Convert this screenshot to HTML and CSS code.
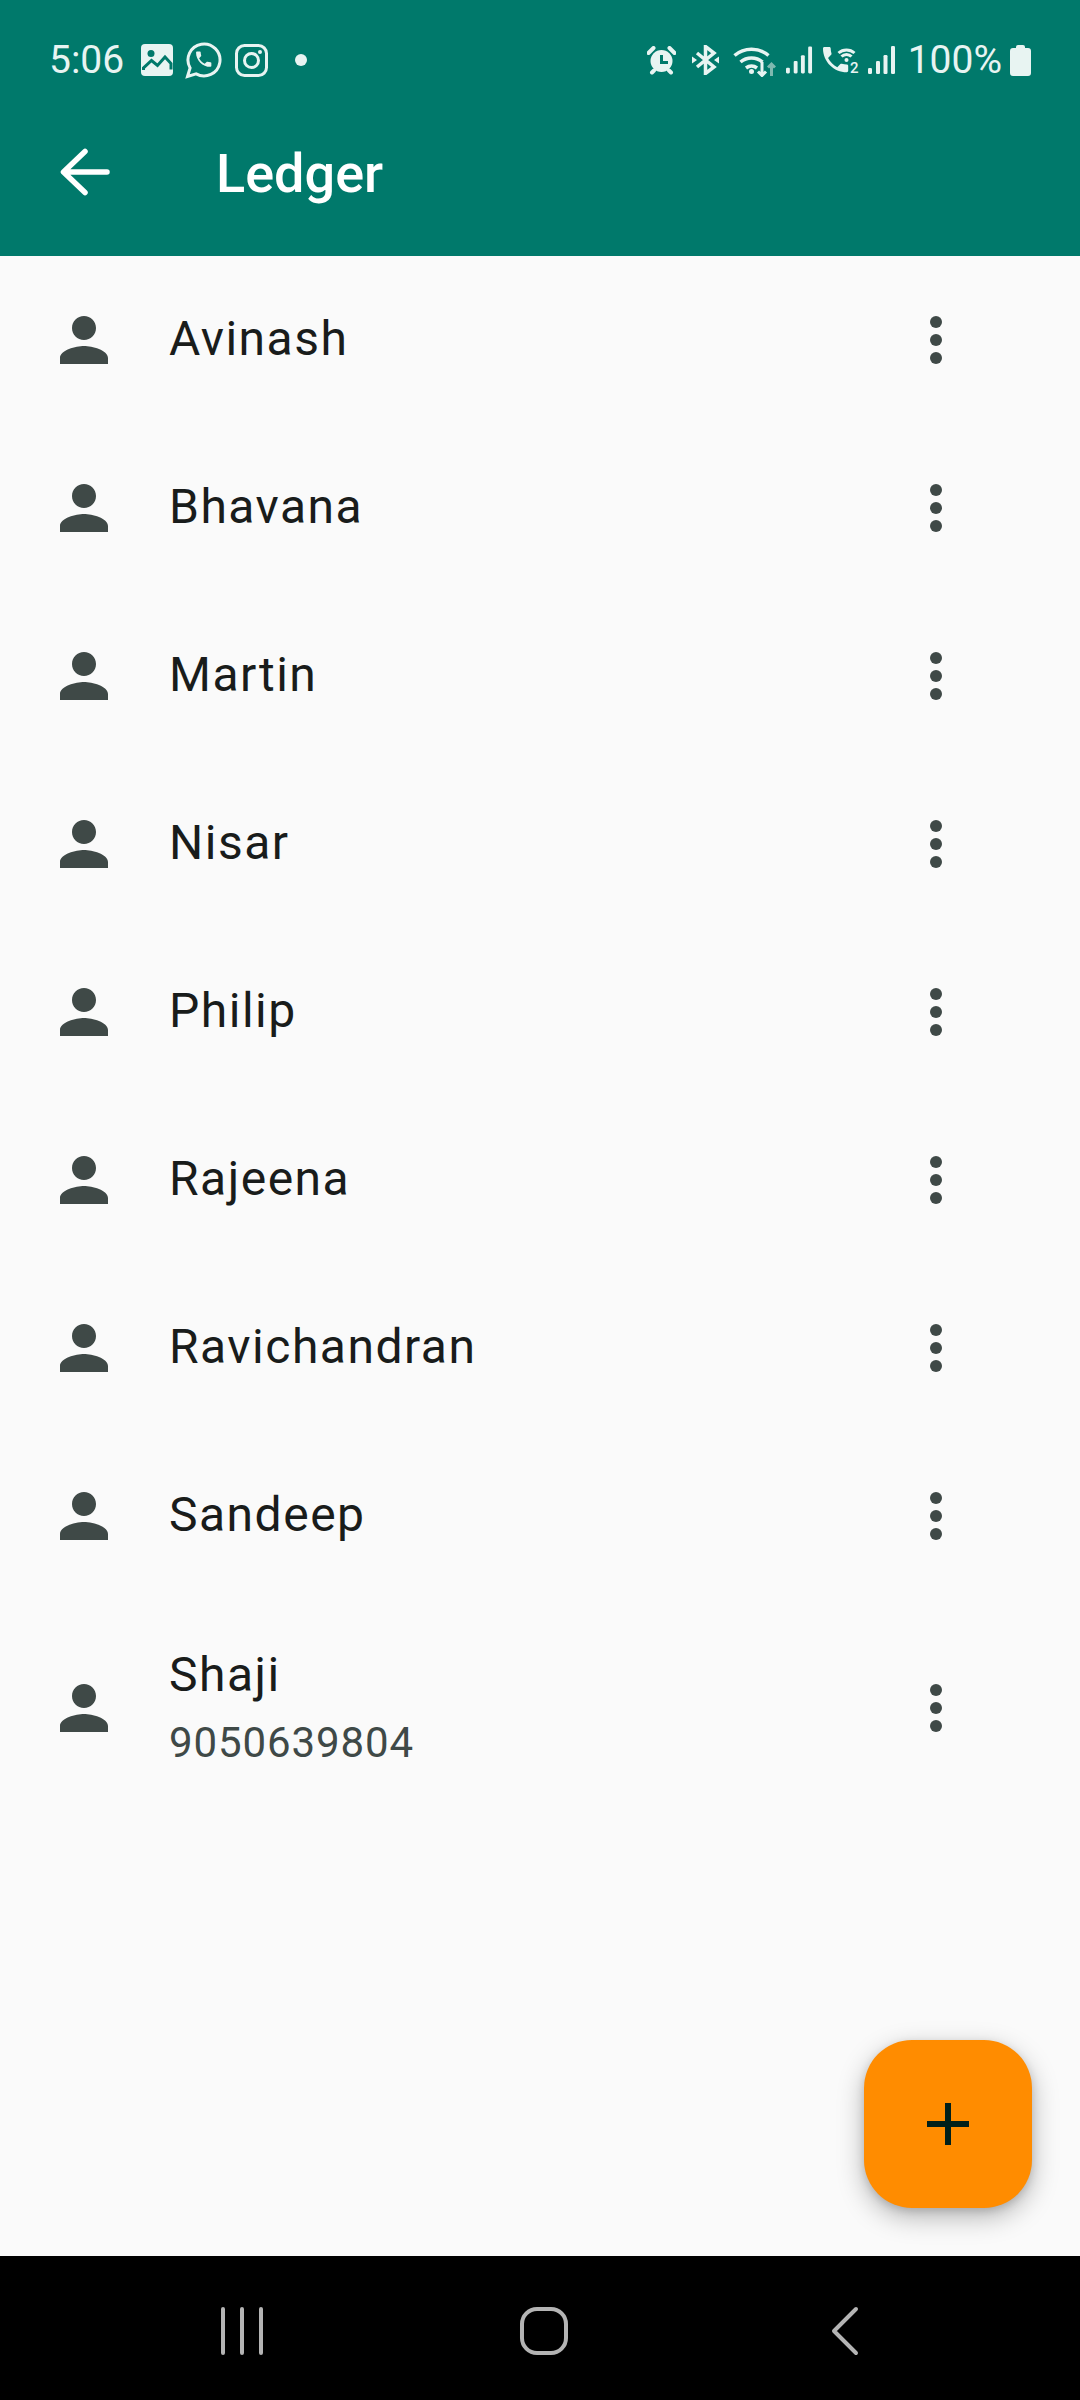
FILE: index.html
```html
<!DOCTYPE html>
<html lang="en">
<head>
    <meta charset="UTF-8">
    <meta name="viewport" content="width=device-width, initial-scale=1.0">
    <title>Ledger</title>
    <link rel="stylesheet" href="styles.css">
</head>
<body>
    <svg class="defs" width="0" height="0">
        <symbol id="person" viewBox="0 0 24 24">
            <path d="M12 12c2.21 0 4-1.79 4-4s-1.79-4-4-4-4 1.79-4 4 1.79 4 4 4zm0 2c-2.67 0-8 1.34-8 4v2h16v-2c0-2.66-5.33-4-8-4z"/>
        </symbol>
        <symbol id="more" viewBox="0 0 24 24">
            <circle cx="12" cy="6" r="2"/>
            <circle cx="12" cy="12" r="2"/>
            <circle cx="12" cy="18" r="2"/>
        </symbol>
        <symbol id="signal" viewBox="0 0 28 30">
            <rect x="0" y="23" width="4" height="6" rx="1.200"/>
            <rect x="8" y="16" width="4" height="13" rx="1.200"/>
            <rect x="15.500" y="10" width="4" height="19" rx="1.200"/>
            <rect x="23" y="1" width="4" height="28" rx="1.200"/>
        </symbol>
    </svg>

    <!-- Status bar and toolbar -->
    <header class="app-header">
        <div class="status-bar">
            <div class="status-left">
                <span class="status-time">5:06</span>
                <svg class="ic-image" width="32" height="32" viewBox="0 0 32 32">
                    <rect width="32" height="32" rx="4"/>
                    <circle class="cut-fill" cx="10" cy="9.500" r="3.500"/>
                    <path class="cut-line" d="M2.500 26v-2l8-7.500 6 5 7.500-8.500 6 6.500v6"/>
                </svg>
                <svg class="ic-whatsapp" width="37" height="38" viewBox="0 0 37 38">
                    <path class="line" d="M2.500 35.500l2.600-8.600a16 16 0 1 1 6 6z"/>
                    <g transform="translate(8.500 8) scale(.85)"><path d="M6.620 10.790c1.440 2.830 3.760 5.140 6.590 6.590l2.200-2.200c.27-.27.67-.36 1.020-.24 1.120.37 2.330.57 3.570.57.55 0 1 .45 1 1V20c0 .55-.45 1-1 1-9.390 0-17-7.610-17-17 0-.55.45-1 1-1h3.500c.55 0 1 .45 1 1 0 1.250.2 2.450.57 3.570.11.350.03.74-.25 1.020l-2.200 2.200z"/></g>
                </svg>
                <svg class="ic-insta" width="33" height="33" viewBox="0 0 33 33">
                    <rect class="line" x="1.500" y="1.500" width="30" height="30" rx="8"/>
                    <circle class="line" cx="16.500" cy="16.500" r="7"/>
                    <circle cx="25" cy="8" r="2"/>
                </svg>
                <span class="status-dot"></span>
            </div>
            <div class="status-right">
                <svg class="ic-alarm" width="29" height="29" viewBox="0 0 29 29">
                    <circle cx="14.500" cy="15" r="11"/>
                    <path class="cut-line thin" d="M14.500 9v7.500h6.500"/>
                    <path class="line thick" d="M1.500 7l5-5M27.500 7l-5-5M5 26.500l2-2M24 26.500l-2-2"/>
                </svg>
                <svg class="ic-bt" width="27" height="30" viewBox="0 0 27 30">
                    <path class="line bold" d="M5 8l17 14-8.500 6.500V1.500L22 8 5 22"/>
                    <path d="M0 11.500l5 3.500-5 3.500zM27 11.500l-5 3.500 5 3.500z"/>
                </svg>
                <svg class="ic-wifi" width="43" height="33" viewBox="0 0 43 33">
                    <path class="line bold" d="M1.500 11.500a26 26 0 0 1 34 0M7.500 18a17 17 0 0 1 22 0M13 24a9 9 0 0 1 11 0"/>
                    <circle cx="18.500" cy="27.500" r="2.500"/>
                    <path class="line" d="M29 18v13.500M25 27.500l4 4 4-4"/>
                    <path class="line faint" d="M38.500 32v-12M35 23.500l3.500-3.500 3.500 3.500"/>
                </svg>
                <svg class="ic-signal" width="27" height="30"><use href="#signal"/></svg>
                <svg class="ic-call" width="38" height="34" viewBox="0 -2 38 34">
                    <g transform="translate(-3.200 -2.200) scale(1.400)"><path d="M6.620 10.790c1.440 2.830 3.760 5.140 6.590 6.590l2.200-2.200c.27-.27.67-.36 1.020-.24 1.120.37 2.330.57 3.570.57.55 0 1 .45 1 1V20c0 .55-.45 1-1 1-9.390 0-17-7.610-17-17 0-.55.45-1 1-1h3.500c.55 0 1 .45 1 1 0 1.250.2 2.450.57 3.570.11.350.03.74-.25 1.020l-2.200 2.200z"/></g>
                    <path class="line" d="M16.500 8a12 12 0 0 1 16 0M19.500 11.500a7 7 0 0 1 10 0"/>
                    <circle cx="24.500" cy="15" r="2"/>
                    <text class="call-sim" x="28" y="28">2</text>
                </svg>
                <svg class="ic-signal-2" width="28" height="30"><use href="#signal"/></svg>
                <span class="status-battery">100%</span>
                <svg class="ic-battery" width="21" height="31" viewBox="0 0 21 31">
                    <path d="M6 2a2 2 0 0 1 2-2h5a2 2 0 0 1 2 2v1h3a3 3 0 0 1 3 3v22a3 3 0 0 1-3 3H3a3 3 0 0 1-3-3V6a3 3 0 0 1 3-3h3z"/>
                </svg>
            </div>
        </div>
        <div class="toolbar">
            <svg class="back-icon" width="72" height="72" viewBox="0 0 72 72">
                <path d="M59 36H16M37 15.500L15.500 36 37 56.500"/>
            </svg>
            <h1 class="toolbar-title">Ledger</h1>
        </div>
    </header>

    <main class="ledger">
        <ul class="person-list">
            <li class="person-row">
                <svg class="person-icon"><use href="#person"/></svg>
                <div class="person-text"><div class="person-name">Avinash</div></div>
                <svg class="more-icon"><use href="#more"/></svg>
            </li>
            <li class="person-row">
                <svg class="person-icon"><use href="#person"/></svg>
                <div class="person-text"><div class="person-name">Bhavana</div></div>
                <svg class="more-icon"><use href="#more"/></svg>
            </li>
            <li class="person-row">
                <svg class="person-icon"><use href="#person"/></svg>
                <div class="person-text"><div class="person-name">Martin</div></div>
                <svg class="more-icon"><use href="#more"/></svg>
            </li>
            <li class="person-row">
                <svg class="person-icon"><use href="#person"/></svg>
                <div class="person-text"><div class="person-name">Nisar</div></div>
                <svg class="more-icon"><use href="#more"/></svg>
            </li>
            <li class="person-row">
                <svg class="person-icon"><use href="#person"/></svg>
                <div class="person-text"><div class="person-name">Philip</div></div>
                <svg class="more-icon"><use href="#more"/></svg>
            </li>
            <li class="person-row">
                <svg class="person-icon"><use href="#person"/></svg>
                <div class="person-text"><div class="person-name">Rajeena</div></div>
                <svg class="more-icon"><use href="#more"/></svg>
            </li>
            <li class="person-row">
                <svg class="person-icon"><use href="#person"/></svg>
                <div class="person-text"><div class="person-name">Ravichandran</div></div>
                <svg class="more-icon"><use href="#more"/></svg>
            </li>
            <li class="person-row">
                <svg class="person-icon"><use href="#person"/></svg>
                <div class="person-text"><div class="person-name">Sandeep</div></div>
                <svg class="more-icon"><use href="#more"/></svg>
            </li>
            <li class="person-row two-line">
                <svg class="person-icon"><use href="#person"/></svg>
                <div class="person-text">
                    <div class="person-name">Shaji</div>
                    <div class="person-phone">9050639804</div>
                </div>
                <svg class="more-icon"><use href="#more"/></svg>
            </li>
        </ul>

        <button class="fab" aria-label="Add">
            <svg width="42" height="42" viewBox="0 0 42 42"><path d="M21 0v42M0 21h42"/></svg>
        </button>
    </main>

    <!-- System navigation -->
    <nav class="nav-bar">
        <svg class="nav-recents" width="44" height="48" viewBox="0 0 44 48">
            <path d="M3 2v44M22 2v44M41 2v44"/>
        </svg>
        <svg class="nav-home" width="52" height="52" viewBox="0 0 52 52">
            <rect x="4" y="4" width="44" height="44" rx="15"/>
        </svg>
        <svg class="nav-back" width="30" height="50" viewBox="0 0 30 50">
            <path d="M26 3L4 25l22 22"/>
        </svg>
    </nav>
</body>
</html>
```

FILE: styles.css
```css
/* General styles */
* {
    box-sizing: border-box;
}

html, body {
    margin: 0;
    height: 2400px;
}

body {
    display: flex;
    flex-direction: column;
    width: 1080px;
    overflow: hidden;
    background: #fafafa;
    font-family: Roboto, "Noto Sans", sans-serif;
}

.defs {
    position: absolute;
}

/* Status bar */
.app-header {
    height: 256px;
    background: #00796b;
    color: #fff;
}

.status-bar {
    display: flex;
    justify-content: space-between;
    align-items: center;
    height: 88px;
    padding: 32px 49px 0 49px;
    color: #e8f4f2;
    font-size: 39px;
    line-height: 44px;
}

.status-bar svg {
    display: block;
    flex: none;
    fill: #e8f4f2;
}

.status-left,
.status-right {
    display: flex;
    align-items: center;
}

.status-time {
    width: 92px;
}

.ic-whatsapp {
    margin-left: 12px;
}

.ic-insta {
    margin-left: 13px;
}

.status-dot {
    width: 12px;
    height: 12px;
    margin-left: 27px;
    border-radius: 50%;
    background: #e8f4f2;
}

.status-bar .line {
    fill: none;
    stroke: #e8f4f2;
    stroke-width: 3;
}

.status-bar .line.bold {
    stroke-width: 3.500;
}

.status-bar .line.thick {
    stroke-width: 4;
    stroke-linecap: round;
}

.status-bar .line.faint {
    stroke: #7fb9b0;
}

.status-bar .cut-fill {
    fill: #00796b;
}

.status-bar .cut-line {
    fill: none;
    stroke: #00796b;
    stroke-width: 3;
}

.call-sim {
    font-size: 15px;
    font-weight: 500;
}

.ic-bt {
    margin-left: 16px;
}

.ic-wifi {
    margin-left: 14px;
}

.ic-signal {
    margin-left: 10px;
}

.ic-call {
    margin-left: 9px;
}

.ic-signal-2 {
    margin-left: 8px;
}

.status-battery {
    margin-left: 12px;
    white-space: nowrap;
}

.ic-battery {
    margin-left: 8px;
}

/* Toolbar */
.toolbar {
    display: flex;
    align-items: center;
    height: 168px;
    padding-left: 48px;
}

.back-icon {
    flex: none;
    fill: none;
    stroke: #fff;
    stroke-width: 5.500;
    stroke-linecap: round;
    stroke-linejoin: round;
}

.toolbar-title {
    margin: 3px 0 0 96px;
    font-size: 54px;
    font-weight: 500;
    line-height: 64px;
}

/* Ledger list */
.ledger {
    position: relative;
    flex: 1;
}

.person-list {
    margin: 0;
    padding: 0;
    list-style: none;
}

.person-row {
    display: flex;
    align-items: center;
    height: 168px;
    padding-left: 48px;
}

.person-row.two-line {
    height: 216px;
}

.person-icon {
    flex: none;
    width: 72px;
    height: 72px;
    fill: #3f4947;
}

.person-text {
    width: 731px;
    margin-left: 49px;
    padding-bottom: 2px;
}

.person-name {
    color: #191c1b;
    font-size: 48px;
    line-height: 64px;
    letter-spacing: 1.500px;
}

.person-phone {
    margin-top: 8px;
    color: #3f4947;
    font-size: 42px;
    line-height: 56px;
    letter-spacing: .9px;
}

.more-icon {
    flex: none;
    width: 72px;
    height: 72px;
    fill: #3f4947;
}

/* Add button, floats over the list */
.fab {
    position: absolute;
    right: 48px;
    bottom: 48px;
    display: flex;
    align-items: center;
    justify-content: center;
    width: 168px;
    height: 168px;
    padding: 0;
    border: 0;
    border-radius: 48px;
    background: #ff8c00;
    box-shadow: 0 9px 27px rgba(0, 0, 0, .28), 0 3px 9px rgba(0, 0, 0, .14);
}

.fab svg {
    fill: none;
    stroke: #00201a;
    stroke-width: 6;
}

/* System navigation */
.nav-bar {
    display: flex;
    flex: none;
    align-items: center;
    height: 144px;
    padding: 6px 0 0 220px;
    background: #000;
}

.nav-bar svg {
    flex: none;
    fill: none;
    stroke: #b4b4b4;
    stroke-width: 4;
    stroke-linecap: round;
    stroke-linejoin: round;
}

.nav-home {
    margin-left: 254px;
}

.nav-back {
    margin-left: 260px;
}
```
